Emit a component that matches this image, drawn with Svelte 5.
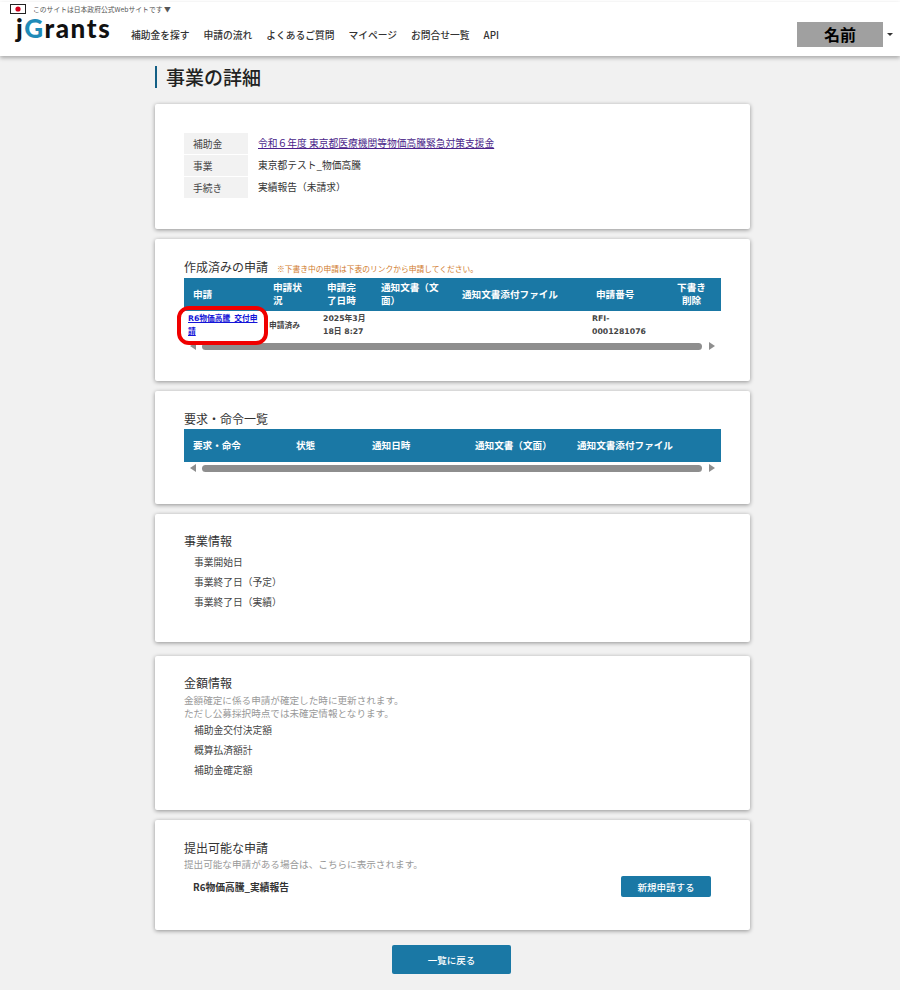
<script>
  const nav = ['補助金を探す', '申請の流れ', 'よくあるご質問', 'マイページ', 'お問合せ一覧', 'API'];

  const summary = [
    { label: '補助金', value: '令和６年度 東京都医療機関等物価高騰緊急対策支援金', link: true },
    { label: '事業', value: '東京都テスト_物価高騰' },
    { label: '手続き', value: '実績報告（未請求）' },
  ];

  const orders = ['要求・命令', '状態', '通知日時', '通知文書（文面）', '通知文書添付ファイル'];
  const business = ['事業開始日', '事業終了日（予定）', '事業終了日（実績）'];
  const amounts = ['補助金交付決定額', '概算払済額計', '補助金確定額'];
</script>

<header>
  <div class="gov">
    <svg class="flag" width="16" height="10" viewBox="0 0 16 10">
      <rect x="0.5" y="0.5" width="15" height="9" fill="#fff" stroke="#222" />
      <circle cx="8" cy="5" r="2.6" fill="#d3001c" />
    </svg>
    <span>このサイトは日本政府公式Webサイトです ▼</span>
  </div>
  <div class="bar">
    <div class="logo">j<span>G</span>rants</div>
    <nav>
      {#each nav as item}
        <span>{item}</span>
      {/each}
    </nav>
    <div class="user">名前</div>
    <div class="caret"></div>
  </div>
</header>

<main>
  <h1>事業の詳細</h1>

  <section class="card first">
    <div class="summary">
      {#each summary as row}
        <div class="label">{row.label}</div>
        {#if row.link}
          <a class="value visited" href="#top">{row.value}</a>
        {:else}
          <div class="value">{row.value}</div>
        {/if}
      {/each}
    </div>
  </section>

  <section class="card apps">
    <div class="heading">
      <h2>作成済みの申請</h2>
      <span class="warn">※下書き中の申請は下表のリンクから申請してください。</span>
    </div>
    <div class="table-wrap">
      <table>
        <colgroup>
          <col style="width:80px" /><col style="width:54px" /><col style="width:54px" />
          <col style="width:81px" /><col style="width:134px" /><col style="width:81px" /><col style="width:53px" />
        </colgroup>
        <thead>
          <tr>
            <th>申請</th>
            <th>申請状況</th>
            <th>申請完了日時</th>
            <th>通知文書（文面）</th>
            <th>通知文書添付ファイル</th>
            <th>申請番号</th>
            <th class="center">下書き削除</th>
          </tr>
        </thead>
        <tbody>
          <tr>
            <td class="name"><a href="#top">R6物価高騰_交付申請</a></td>
            <td class="status">申請済み</td>
            <td class="date">2025年3月18日 8:27</td>
            <td></td>
            <td></td>
            <td>RFI-<br />0001281076</td>
            <td></td>
          </tr>
        </tbody>
      </table>
      <div class="highlight"></div>
      <div class="scroll">
        <i class="left"></i>
        <b></b>
        <i class="right"></i>
      </div>
    </div>
  </section>

  <section class="card orders">
    <h2>要求・命令一覧</h2>
    <table>
      <colgroup>
        <col style="width:103px" /><col style="width:76px" /><col style="width:103px" />
        <col style="width:102px" /><col style="width:153px" />
      </colgroup>
      <thead>
        <tr>
          {#each orders as col}
            <th>{col}</th>
          {/each}
        </tr>
      </thead>
    </table>
    <div class="scroll">
      <i class="left"></i>
      <b></b>
      <i class="right"></i>
    </div>
  </section>

  <section class="card info">
    <h2>事業情報</h2>
    <ul>
      {#each business as item}
        <li>{item}</li>
      {/each}
    </ul>
  </section>

  <section class="card money">
    <h2>金額情報</h2>
    <p class="note">金額確定に係る申請が確定した時に更新されます。<br />ただし公募採択時点では未確定情報となります。</p>
    <ul>
      {#each amounts as item}
        <li>{item}</li>
      {/each}
    </ul>
  </section>

  <section class="card submit">
    <h2>提出可能な申請</h2>
    <p class="note">提出可能な申請がある場合は、こちらに表示されます。</p>
    <div class="submit-row">
      <strong>R6物価高騰_実績報告</strong>
      <button>新規申請する</button>
    </div>
  </section>

  <button class="back">一覧に戻る</button>
</main>

<style>
  :global(body) {
    background: #fff;
    font-family: "Noto Sans CJK JP", "Liberation Sans", sans-serif;
    color: #333;
  }

  header {
    height: 54px;
    margin-top: 2px;
    background: #fff;
    box-shadow: 0 2px 4px rgba(0, 0, 0, 0.3);
    position: relative;
  }

  .gov {
    display: flex;
    align-items: center;
    gap: 7px;
    padding: 1px 0 0 10px;
    height: 12px;
    font-size: 6.8px;
    line-height: 12px;
    color: #555;
  }

  .flag {
    flex: none;
  }

  .bar {
    display: flex;
    align-items: flex-start;
    height: 40px;
    padding-left: 16px;
  }

  .logo {
    width: 115px;
    font-family: Lato, "Liberation Sans", sans-serif;
    font-size: 26px;
    font-weight: 900;
    line-height: 26px;
    color: #111;
    letter-spacing: 1.6px;
  }

  .logo span {
    color: #1f8bb8;
  }

  nav {
    display: flex;
    gap: 14px;
    padding-top: 12px;
    font-size: 9.75px;
    line-height: 16px;
    font-weight: 500;
    color: #333;
  }

  .user {
    margin: 7px 0 0 auto;
    width: 86px;
    height: 25px;
    background: #a0a0a0;
    color: #000;
    font-size: 16px;
    font-weight: 700;
    line-height: 25px;
    text-align: center;
  }

  .caret {
    margin: 18px 7px 0 4px;
    border-left: 3px solid transparent;
    border-right: 3px solid transparent;
    border-top: 3px solid #333;
  }

  main {
    background: #f1f1f1;
    height: 934px;
    padding: 0 150px 0 155px;
    display: flex;
    flex-direction: column;
    align-items: flex-start;
  }

  h1 {
    margin: 10px 0 16px;
    padding-left: 9px;
    border-left: 2px solid #135f85;
    font-size: 19px;
    font-weight: 500;
    line-height: 22px;
    color: #222;
  }

  .card {
    box-sizing: border-box;
    width: 595px;
    margin-bottom: 10px;
    padding: 0 29px;
    background: #fff;
    box-shadow: 0 1px 4px rgba(0, 0, 0, 0.4);
    border-radius: 2px;
  }

  .first {
    height: 125px;
    padding-top: 29px;
  }

  .summary {
    display: grid;
    grid-template-columns: 64px 1fr;
    grid-auto-rows: 22px;
    column-gap: 10px;
    font-size: 9.75px;
    line-height: 20px;
  }

  .label {
    height: 21px;
    padding-left: 9px;
    background: #f2f2f2;
    color: #444;
    line-height: 23px;
  }

  .value {
    color: #333;
  }

  .visited {
    color: #4b1f8a;
  }

  .apps {
    height: 142px;
    padding-top: 18px;
  }

  .heading {
    display: flex;
    align-items: baseline;
    gap: 9px;
    padding-bottom: 2px;
  }

  h2 {
    margin: 0;
    font-size: 12px;
    font-weight: 400;
    line-height: 19px;
    color: #333;
  }

  .warn {
    font-size: 7.75px;
    color: #d07a2a;
  }

  .table-wrap {
    position: relative;
  }

  table {
    table-layout: fixed;
    width: 537px;
    border-collapse: collapse;
  }

  th {
    box-sizing: border-box;
    height: 33px;
    padding: 0 9px 1px;
    background: #1a78a5;
    color: #fff;
    font-size: 9.6px;
    font-weight: 700;
    line-height: 13px;
    text-align: left;
  }

  th.center {
    text-align: center;
    padding: 0 14px 1px 8px;
  }

  td {
    height: 31px;
    box-sizing: border-box;
    padding: 1px 5px 0;
    vertical-align: top;
    font-family: "DejaVu Sans", "Noto Sans CJK JP", sans-serif;
    font-size: 7.75px;
    font-weight: 700;
    line-height: 13px;
    color: #444;
  }

  td.name {
    padding: 1px 0 0 4px;
  }

  td.date {
    padding-right: 0;
  }

  td a {
    color: #1414d8;
  }

  td.status {
    padding: 0 0 3px 5px;
    vertical-align: middle;
  }

  .highlight {
    position: absolute;
    left: -7px;
    top: 28px;
    width: 83px;
    height: 31px;
    border: 4px solid #f00000;
    border-radius: 12px;
  }

  .scroll {
    display: flex;
    align-items: center;
    width: 537px;
    height: 8px;
  }

  .scroll b {
    width: 500px;
    height: 7px;
    border-radius: 4px;
    background: #8e8e8e;
  }

  .scroll i {
    width: 0;
    height: 0;
    border-top: 4px solid transparent;
    border-bottom: 4px solid transparent;
  }

  .scroll .left {
    margin: 0 6px 0 6px;
    border-right: 6px solid #8e8e8e;
  }

  .scroll .right {
    margin-left: 7px;
    border-left: 6px solid #8e8e8e;
  }

  .orders {
    height: 113px;
    padding-top: 18px;
  }

  .orders h2 {
    margin-bottom: 1px;
  }

  .orders .scroll {
    margin-top: 2px;
  }

  .info {
    height: 128px;
    margin-bottom: 14px;
    padding-top: 17px;
  }

  ul {
    margin: 0;
    padding: 0 0 0 10px;
    list-style: none;
    font-size: 9.75px;
  }

  li {
    height: 20px;
    line-height: 20px;
    color: #444;
  }

  .info ul {
    margin-top: 2px;
  }

  .money {
    height: 154px;
    padding-top: 17px;
  }

  .money h2 {
    margin-bottom: 2px;
  }

  .note {
    margin: 0;
    font-size: 9.6px;
    line-height: 13px;
    color: #999;
  }

  .submit {
    height: 110px;
    margin-bottom: 15px;
    padding-top: 18px;
  }

  .submit .note {
    margin-top: 1px;
  }

  .submit-row {
    display: flex;
    align-items: center;
    justify-content: space-between;
    padding: 5px 10px 0 9px;
  }

  .submit-row strong {
    font-size: 9.75px;
    font-weight: 700;
    color: #333;
  }

  button {
    width: 90px;
    height: 21px;
    padding: 0;
    border: 0;
    border-radius: 2px;
    background: #1a78a5;
    color: #fff;
    font: 500 9.5px "Noto Sans CJK JP", sans-serif;
  }

  .back {
    width: 119px;
    height: 29px;
    align-self: flex-start;
    margin-left: 237px;
  }
</style>
